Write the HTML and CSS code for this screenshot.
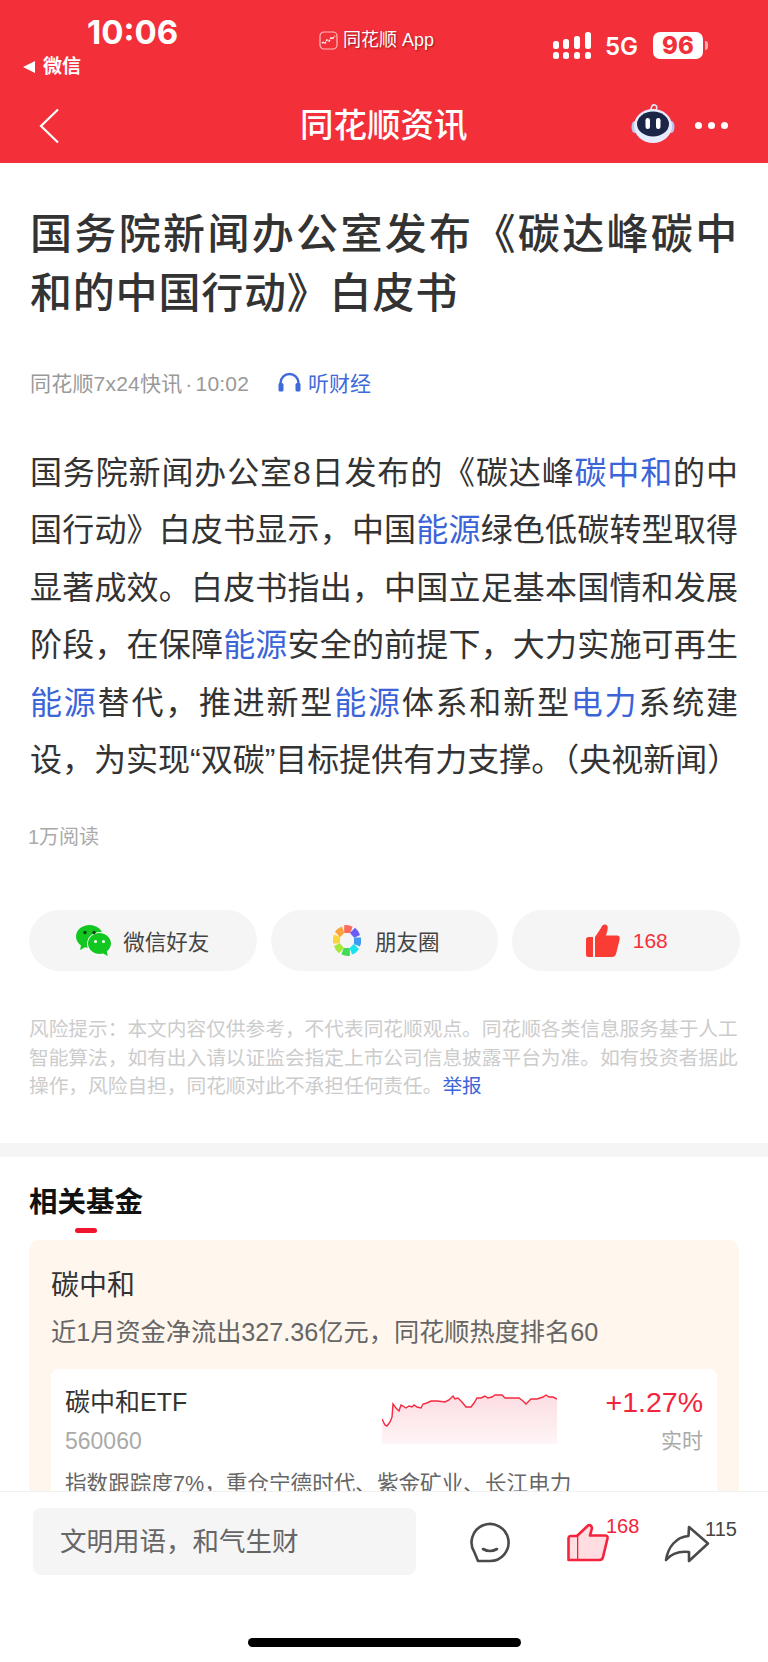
FILE: index.html
```html
<!DOCTYPE html>
<html lang="zh-CN">
	<head>
		<meta charset="utf-8" />
		<title>同花顺资讯</title>
		<link rel="stylesheet" href="styles.css">
	</head>
	<body>
		<div id="page">
			<!--头部-->
			<div id="header">
				<div class="status">
					<div class="s_left">
						<div class="s_time">10:06</div>
						<div class="s_back"><span class="s_tri"></span>微信</div>
					</div>
					<div class="s_center">
						<svg class="s_logo" width="19" height="19" viewBox="0 0 19 19"><rect x="1" y="1" width="17" height="17" rx="4" fill="#f3303a" stroke="#fbb" stroke-width="1.200"/><path d="M3 12l2-1 1 1 2-3 2 1 2-3 1 1 3-3" fill="none" stroke="#fff" stroke-width="1.500" stroke-dasharray="2 1"/></svg>
						<span class="s_app">同花顺 App</span>
					</div>
					<div class="s_right">
						<svg class="s_signal" width="39" height="27" viewBox="0 0 39 27"><g fill="#fff"><rect x="0" y="9" width="6" height="8" rx="2.500"/><rect x="10" y="7" width="6" height="10" rx="2.500"/><rect x="21" y="4" width="6" height="13" rx="2.500"/><rect x="32" y="0" width="6" height="17" rx="2.500"/><rect x="0" y="20" width="6" height="7" rx="2.500"/><rect x="10" y="20" width="6" height="7" rx="2.500"/><rect x="21" y="20" width="6" height="7" rx="2.500"/><rect x="32" y="20" width="6" height="7" rx="2.500"/></g></svg>
						<span class="s_net">5G</span>
						<span class="s_batt">96</span>
						<span class="s_tip"></span>
					</div>
				</div>
				<div class="nav">
					<svg class="n_back" width="22" height="36" viewBox="0 0 22 36"><path d="M19 1.500L2 18l17 16.500" fill="none" stroke="#fff" stroke-width="2.200"/></svg>
					<div class="n_title">同花顺资讯</div>
					<svg class="n_robot" width="44" height="40" viewBox="0 0 44 40"><path d="M20 8Q20 1 24 2 27 3 25 7" fill="none" stroke="#dfe6fb" stroke-width="1.600"/><ellipse cx="3.500" cy="24" rx="3" ry="6" fill="#b9c6f0"/><ellipse cx="40.500" cy="24" rx="3" ry="6" fill="#b9c6f0"/><ellipse cx="22" cy="23" rx="19" ry="17" fill="#e6ecfd"/><ellipse cx="22" cy="21" rx="16" ry="12.500" fill="#1d2547"/><rect x="14.500" y="15" width="4.500" height="11" rx="2.200" fill="#fff"/><rect x="25" y="15" width="4.500" height="11" rx="2.200" fill="#fff"/></svg>
					<div class="n_more"><span></span><span></span><span></span></div>
				</div>
			</div>
			<!--文章-->
			<div class="article">
				<h1 class="a_title">国务院新闻办公室发布《碳达峰碳中和的中国行动》白皮书</h1>
				<div class="a_meta">
					<span class="a_from">同花顺7x24快讯<span class="a_dot">·</span>10:02</span>
					<svg class="a_ear" width="23" height="20" viewBox="0 0 23 20"><path d="M2.500 16V11a9 9 0 0 1 18 0v5" fill="none" stroke="#3f6ad8" stroke-width="2.400"/><rect x="0.500" y="11" width="5" height="8.500" rx="1.500" fill="#3f6ad8"/><rect x="17.500" y="11" width="5" height="8.500" rx="1.500" fill="#3f6ad8"/></svg>
					<span class="a_listen">听财经</span>
				</div>
				<div class="a_body">
					<span class="line">国务院新闻办公室8日发布的《碳达峰<a>碳中和</a>的中</span>
					<span class="line">国行动》白皮书显示，中国<a>能源</a>绿色低碳转型取得</span>
					<span class="line">显著成效。白皮书指出，中国立足基本国情和发展</span>
					<span class="line">阶段，在保障<a>能源</a>安全的前提下，大力实施可再生</span>
					<span class="line"><a>能源</a>替代，推进新型<a>能源</a>体系和新型<a>电力</a>系统建</span>
					<span class="line last">设，为实现“双碳”目标提供有力支撑。（央视新闻）</span>
				</div>
				<div class="a_read">1万阅读</div>
				<div class="btns">
					<div class="btn">
						<svg width="36" height="32" viewBox="0 0 36 32"><path d="M13.500 0C6 0 0 5 0 11.500c0 3.700 2 6.800 5 8.900L4 25l5-2.700c1.400.4 2.900.6 4.500.6C21 22.900 27 17.900 27 11.500S21 0 13.500 0z" fill="#12c71f"/><ellipse cx="24" cy="19" rx="13" ry="12" fill="#fff"/><path d="M23.500 8C29.300 8 35 12.500 35 18.500c0 3.200-1.600 6-4.200 7.900l.9 4.600-4.600-2.500c-1.200.3-2.400.5-3.600.5-6 0-11.500-4.500-11.500-10.500S17.500 8 23.500 8z" fill="#12c71f"/><circle cx="9" cy="7.500" r="1.700" fill="#0b3d0f"/><circle cx="18" cy="7.500" r="1.700" fill="#0b3d0f"/><circle cx="19.500" cy="16.500" r="1.500" fill="#fff"/><circle cx="27.500" cy="16.500" r="1.500" fill="#fff"/></svg>
						<span>微信好友</span>
					</div>
					<div class="btn b_ring">
						<svg width="28" height="31" viewBox="-14 -15.500 28 31"><g transform="scale(.93 1)"><path d="M-3-7.500L-3-15.200A15 15 0 0 1 6-13.800L3.500-7.500z" fill="#fb6b5b"/><path d="M-3-7.500L-3-15.200A15 15 0 0 1 6-13.800L3.500-7.500z" fill="#6a5cf6" transform="rotate(45)"/><path d="M-3-7.500L-3-15.200A15 15 0 0 1 6-13.800L3.500-7.500z" fill="#3f9bf0" transform="rotate(90)"/><path d="M-3-7.500L-3-15.200A15 15 0 0 1 6-13.800L3.500-7.500z" fill="#19e3f0" transform="rotate(135)"/><path d="M-3-7.500L-3-15.200A15 15 0 0 1 6-13.800L3.500-7.500z" fill="#3fdc56" transform="rotate(180)"/><path d="M-3-7.500L-3-15.200A15 15 0 0 1 6-13.800L3.500-7.500z" fill="#a4e83c" transform="rotate(225)"/><path d="M-3-7.500L-3-15.200A15 15 0 0 1 6-13.800L3.500-7.500z" fill="#fcd33b" transform="rotate(270)"/><path d="M-3-7.500L-3-15.200A15 15 0 0 1 6-13.800L3.500-7.500z" fill="#fca43b" transform="rotate(315)"/></g></svg>
						<span>朋友圈</span>
					</div>
					<div class="btn b_red">
						<svg width="34" height="33" viewBox="0 0 34 33"><path d="M0 15.500Q0 13 2.500 13H7v20H2.500Q0 33 0 30.500z" fill="#f93c34"/><path d="M9 13L15 4Q16 .5 19 .5 22.500 1 21.500 6L20 11.500h11Q34.500 11.500 33.500 16L30 30Q29 33 26 33H9z" fill="#f93c34"/></svg>
						<span>168</span>
					</div>
				</div>
				<div class="a_risk">风险提示：本文内容仅供参考，不代表同花顺观点。同花顺各类信息服务基于人工智能算法，如有出入请以证监会指定上市公司信息披露平台为准。如有投资者据此操作，风险自担，同花顺对此不承担任何责任。<a>举报</a></div>
			</div>
			<div class="band"></div>
			<!--相关基金-->
			<div class="fund">
				<h2 class="f_head">相关基金</h2>
				<div class="f_mark"></div>
				<div class="f_card">
					<div class="f_name">碳中和</div>
					<div class="f_sub">近1月资金净流出327.36亿元，同花顺热度排名60</div>
					<div class="f_item">
						<div class="f_row">
							<div class="f_left">
								<div class="f_etf">碳中和ETF</div>
								<div class="f_code">560060</div>
							</div>
							<svg class="f_chart" width="175" height="50" viewBox="0 0 175 50">
								<defs><linearGradient id="cg" x1="0" y1="0" x2="0" y2="1"><stop offset="0" stop-color="#fbdde2"/><stop offset="1" stop-color="#fff5f6"/></linearGradient></defs>
								<path d="M0 25 L3 31 L5 32 L8 28 L10 23 L11 10 L14 14 L17 17 L19 11 L21 12 L24 14 L27 12 L30 13 L32 11 L35 13 L39 14 L41 10 L45 9 L49 7 L55 7 L63 8 L67 6 L71 2 L73 5 L76 4 L80 8 L84 13 L89 13 L92 9 L95 4 L99 4 L103 2 L106 4 L110 3 L113 1 L120 1 L123 4 L137 4 L141 7 L144 10 L147 7 L149 5 L155 5 L161 3 L164 1 L167 3 L171 3 L175 5 V50 H0 Z" fill="url(#cg)"/>
								<path d="M0 25 L3 31 L5 32 L8 28 L10 23 L11 10 L14 14 L17 17 L19 11 L21 12 L24 14 L27 12 L30 13 L32 11 L35 13 L39 14 L41 10 L45 9 L49 7 L55 7 L63 8 L67 6 L71 2 L73 5 L76 4 L80 8 L84 13 L89 13 L92 9 L95 4 L99 4 L103 2 L106 4 L110 3 L113 1 L120 1 L123 4 L137 4 L141 7 L144 10 L147 7 L149 5 L155 5 L161 3 L164 1 L167 3 L171 3 L175 5" fill="none" stroke="#f5283f" stroke-width="1.400"/>
							</svg>
							<div class="f_right">
								<div class="f_pct">+1.27%</div>
								<div class="f_live">实时</div>
							</div>
						</div>
						<div class="f_desc">指数跟踪度7%，重仓宁德时代、紫金矿业、长江电力</div>
					</div>
				</div>
			</div>
			<!--底部栏，盖在内容上面-->
			<div id="bottom">
				<div class="b_row">
					<div class="b_input">文明用语，和气生财</div>
					<div class="b_tool t_comment">
						<svg width="42" height="42" viewBox="0 0 42 42"><path d="M21 39A18.500 18.500 0 1 0 5.500 30.500L9 39z" fill="none" stroke="#4a4a4a" stroke-width="2.600" stroke-linejoin="round"/><path d="M14 27Q21 31 28 27" fill="none" stroke="#4a4a4a" stroke-width="2.600" stroke-linecap="round"/></svg>
					</div>
					<div class="b_tool t_like">
						<svg width="42" height="40" viewBox="0 0 42 40"><path d="M10 13L21 2.500Q24 1 25 5L23 12.500H38Q41 12.500 40.500 15.500L36 34Q35.500 37 32.500 37H10z" fill="#ffdde0" stroke="#f5233b" stroke-width="2.600" stroke-linejoin="round"/><path d="M10 13H4Q1.500 13 1.500 15.500V37H10" fill="#ffdde0" stroke="#f5233b" stroke-width="2.600" stroke-linejoin="round"/></svg>
						<span class="t_num red">168</span>
					</div>
					<div class="b_tool t_share">
						<svg width="46" height="38" viewBox="0 0 46 38"><path d="M25 2L44 18.500 25 36V27C15 26 7 29 2 35 4 22 12 12 24.500 11z" fill="none" stroke="#4a4a4a" stroke-width="2.600" stroke-linejoin="round"/></svg>
						<span class="t_num">115</span>
					</div>
				</div>
				<div class="b_home"></div>
			</div>
		</div>
	</body>
</html>
```

FILE: styles.css
```css
*{margin: 0;padding: 0;box-sizing: border-box;}
body{background: #fff;font-family: "Liberation Sans","Noto Sans CJK SC",sans-serif;color: #333;}
a{color: #3b64d8;text-decoration: none;}
svg{display: block;}
#page{position: relative;width: 768px;height: 1662px;overflow: hidden;background: #fff;}

/*头部*/
#header{height: 163px;background: #f3303a;color: #fff;}
.status{display: flex;height: 88px;}
.s_left{width: 319px;padding: 14px 0 0 23px;}
.s_time{font-family: Inter,"Liberation Sans",sans-serif;font-weight: 700;font-size: 33px;line-height: 37px;margin-left: 64px;}
.s_back{display: flex;align-items: center;font-size: 19px;font-weight: 700;line-height: 24px;margin-top: 4px;}
.s_tri{width: 0;height: 0;border-style: solid;border-width: 6.500px 12px 6.500px 0;border-color: transparent #fff transparent transparent;margin-right: 8px;}
.s_center{display: flex;align-items: center;width: 234px;height: 80px;}
.s_logo{margin-right: 5px;}
.s_app{font-size: 18px;line-height: 24px;text-shadow: 1px 1px 2px rgba(90,0,0,.6);}
.s_right{display: flex;align-items: flex-start;padding-top: 32px;}
.s_net{font-family: Inter,"Liberation Sans",sans-serif;font-size: 24px;font-weight: 600;line-height: 30px;margin-left: 13px;width: 48px;}
.s_batt{width: 50px;height: 27px;background: #fff;border-radius: 7px;color: #f3303a;font-family: Inter,"Liberation Sans",sans-serif;font-size: 24px;font-weight: 800;line-height: 27px;text-align: center;}
.s_tip{width: 3px;height: 9px;margin: 9px 0 0 2px;background: rgba(255,255,255,.6);border-radius: 0 3px 3px 0;}
.nav{display: flex;align-items: center;height: 75px;padding-left: 39px;}
.n_back{margin-right: 239px;}
.n_title{width: 331px;font-size: 33.500px;line-height: 40px;font-weight: 500;}
.n_robot{margin: -5px 20px 0 0;}
.n_more{display: flex;gap: 6px;}
.n_more span{width: 7px;height: 7px;background: #fff;border-radius: 50%;}

/*文章*/
.article{padding: 42px 29px 0 30px;}
.a_title{font-size: 42px;line-height: 59px;letter-spacing: .8px;font-weight: 500;width: 708px;text-align: justify;}
.a_meta{display: flex;align-items: center;height: 30px;margin-top: 44px;font-size: 21px;color: #999;}
.a_from{width: 248px;white-space: nowrap;letter-spacing: .2px;}
.a_dot{margin: 0 3px;}
.a_ear{margin-right: 7px;}
.a_listen{color: #3f6ad8;}
.a_body{margin-top: 48px;font-size: 32px;}
.line{display: block;width: 708px;height: 57.400px;line-height: 57.400px;text-align: justify;text-align-last: justify;}
.line.last{text-align-last: left;white-space: nowrap;}
.a_read{margin: 33px 0 0 -2px;font-size: 20px;line-height: 30px;color: #aaa;}
.btns{display: flex;gap: 14px;margin: 58px 0 0 -1px;}
.btn{display: flex;flex: 0 0 227.500px;align-items: center;justify-content: center;gap: 11px;height: 61px;background: #f5f5f5;border-radius: 31px;font-size: 21.500px;color: #444;}
.b_ring{gap: 14px;padding-left: 4px;}
.b_red{color: #f5303b;font-size: 21px;gap: 13px;padding-left: 2px;}
.a_risk{width: 712px;margin: 44px 0 0 -1px;font-size: 19.700px;line-height: 28.500px;color: #ccc;}
.band{height: 14px;margin-top: 42px;background: #f5f5f5;}

/*相关基金*/
.fund{padding: 27px 29px 0;}
.f_head{font-size: 28.500px;line-height: 36px;font-weight: 700;color: #111;}
.f_mark{width: 22px;height: 5px;margin: 8px 0 0 46px;background: #f0142f;border-radius: 3px;}
.f_card{margin-top: 7px;padding: 28px 22px 40px;background: #fff7ee;border-radius: 10px;}
.f_name{font-size: 28px;line-height: 36px;color: #333;}
.f_sub{margin-top: 12px;font-size: 25.200px;line-height: 32px;color: #666;white-space: nowrap;}
.f_item{margin-top: 21px;padding: 16px 14px;background: #fff;border-radius: 8px;}
.f_row{display: flex;align-items: flex-start;}
.f_left{width: 317px;}
.f_etf{font-size: 25px;line-height: 34px;color: #333;}
.f_code{margin-top: 7px;font-size: 23px;line-height: 30px;color: #aaa;}
.f_chart{margin: 9px 0 0 0;}
.f_right{flex: 1;text-align: right;}
.f_pct{font-size: 28.500px;line-height: 34px;color: #f5233b;}
.f_live{margin-top: 7px;font-size: 21px;line-height: 30px;color: #aaa;}
.f_desc{margin-top: 13px;font-size: 21.600px;line-height: 30px;color: #666;white-space: nowrap;}

/*底部栏*/
#bottom{position: absolute;left: 0;right: 0;top: 1491px;height: 171px;background: #fff;border-top: 1px solid #f0f0f0;}
.b_row{display: flex;align-items: flex-start;padding: 16px 0 0 33px;}
.b_input{width: 383px;height: 67px;padding-left: 27px;background: #f5f5f5;border-radius: 8px;font-size: 26.500px;line-height: 68px;color: #666;}
.b_tool{position: relative;}
.t_comment{margin: 14px 0 0 53px;}
.t_like{margin: 15px 0 0 56px;}
.t_share{margin: 17px 0 0 55px;}
.t_num{position: absolute;left: 100%;top: -8px;margin-left: -5px;font-size: 20px;line-height: 24px;color: #444;}
.t_num.red{color: #f5233b;top: -9px;margin-left: -3px;}
.b_home{width: 273px;height: 9px;margin: 63px 0 0 248px;background: #000;border-radius: 5px;}
```
